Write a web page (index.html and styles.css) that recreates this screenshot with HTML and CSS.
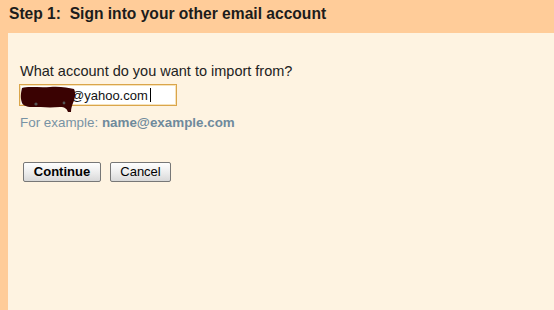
FILE: index.html
```html
<!DOCTYPE html>
<html>
<head>
<meta charset="utf-8">
<link rel="stylesheet" href="styles.css">
</head>
<body>
<div class="header">Step 1:&nbsp; Sign into your other email account</div>
<div class="panel">
  <div class="label">What account do you want to import from?</div>
  <div class="field">
    <span class="redact"></span><span class="val">@yahoo.com</span><span class="caret"></span>
    <svg class="blob" width="60" height="30" viewBox="0 0 60 30">
      <path d="M2 3 C8 1 20 3 30 2 C40 1 48 3 54 4 C56 8 55 14 53 18 C52 21 51 23 51 27 L48 27 C47 24 45 22 40 22 C30 23 20 22 12 22 C6 22 3 20 2 18 C0 12 1 8 2 3 Z" fill="#3a0202"/>
      <circle cx="16" cy="19" r="1.6" fill="#555"/>
      <circle cx="44" cy="18" r="1.4" fill="#555"/>
    </svg>
  </div>
  <div class="example">For example: <b>name@example.com</b></div>
  <div class="buttons">
    <button class="btn bold">Continue</button>
    <button class="btn">Cancel</button>
  </div>
</div>
</body>
</html>
```
FILE: styles.css
```css
html, body {
  margin: 0;
  padding: 0;
  height: 100%;
}
body {
  background: #ffcc99;
  font-family: "Liberation Sans", Arial, sans-serif;
  color: #222;
  display: flex;
  flex-direction: column;
  overflow: hidden;
}
.header {
  height: 33px;
  box-sizing: border-box;
  padding: 4px 0 0 9px;
  font-size: 15.6px;
  font-weight: bold;
  line-height: 19px;
  color: #1c1c1c;
}
.panel {
  flex: 1;
  margin-left: 8px;
  background: #fef3e1;
  padding: 30px 0 0 12px;
}
.label {
  font-size: 14.5px;
  line-height: 16px;
  color: #222;
}
.field {
  position: relative;
  margin-top: 5px;
  margin-left: -1px;
  width: 156px;
  height: 20px;
  border: 1px solid #daa54a;
  background: #fff;
  display: flex;
  align-items: center;
  font-size: 13px;
  color: #111;
  box-shadow: inset 0 0 0 1px #f6e3bd;
}
.redact {
  width: 51px;
  flex: none;
}
.caret {
  width: 1px;
  height: 14px;
  background: #000;
  margin-left: 2px;
}
.blob {
  position: absolute;
  left: 0;
  top: 0;
}
.example {
  margin-top: 9px;
  font-size: 13.4px;
  line-height: 15px;
  color: #7892a4;
}
.example b {
  color: #6f8a9c;
}
.buttons {
  margin-top: 32px;
  margin-left: 3px;
  display: flex;
  gap: 9px;
}
.btn {
  font-family: "Liberation Sans", Arial, sans-serif;
  font-size: 13px;
  height: 20px;
  padding: 0 6px;
  border: 1px solid #777;
  border-radius: 2px;
  background: linear-gradient(#fefefe, #ececec 55%, #d8d8d8);
  color: #000;
  line-height: 16px;
}
.btn.bold {
  font-weight: bold;
  width: 78px;
}
.btn:not(.bold) {
  width: 61px;
}
```
